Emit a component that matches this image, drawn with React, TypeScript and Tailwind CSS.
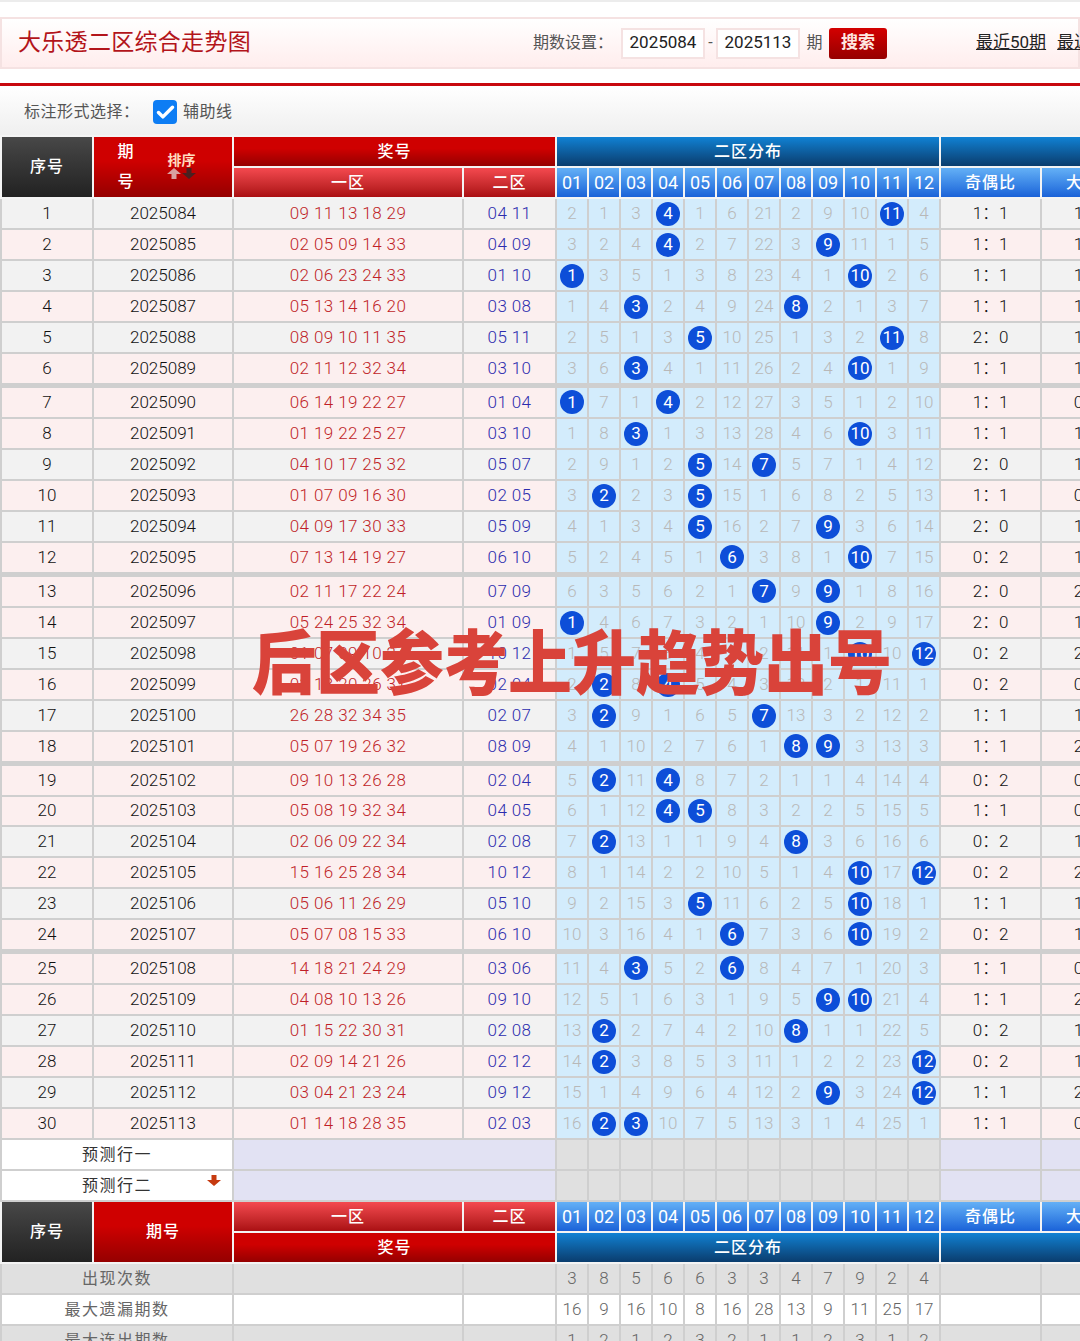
import { Check } from "lucide-react";

const NUMS = ["01", "02", "03", "04", "05", "06", "07", "08", "09", "10", "11", "12"];

// zone one, zone two, odd/even ratio, size ratio
const DRAWS: [string, number[], string, number][] = [
  ["09 11 13 18 29", [4, 11], "1：1", 1],
  ["02 05 09 14 33", [4, 9], "1：1", 1],
  ["02 06 23 24 33", [1, 10], "1：1", 1],
  ["05 13 14 16 20", [3, 8], "1：1", 1],
  ["08 09 10 11 35", [5, 11], "2：0", 1],
  ["02 11 12 32 34", [3, 10], "1：1", 1],
  ["06 14 19 22 27", [1, 4], "1：1", 0],
  ["01 19 22 25 27", [3, 10], "1：1", 1],
  ["04 10 17 25 32", [5, 7], "2：0", 1],
  ["01 07 09 16 30", [2, 5], "1：1", 0],
  ["04 09 17 30 33", [5, 9], "2：0", 1],
  ["07 13 14 19 27", [6, 10], "0：2", 1],
  ["02 11 17 22 24", [7, 9], "2：0", 2],
  ["05 24 25 32 34", [1, 9], "2：0", 1],
  ["01 07 09 10 24", [10, 12], "0：2", 2],
  ["03 13 20 26 31", [2, 4], "0：2", 0],
  ["26 28 32 34 35", [2, 7], "1：1", 1],
  ["05 07 19 26 32", [8, 9], "1：1", 2],
  ["09 10 13 26 28", [2, 4], "0：2", 0],
  ["05 08 19 32 34", [4, 5], "1：1", 0],
  ["02 06 09 22 34", [2, 8], "0：2", 1],
  ["15 16 25 28 34", [10, 12], "0：2", 2],
  ["05 06 11 26 29", [5, 10], "1：1", 1],
  ["05 07 08 15 33", [6, 10], "0：2", 1],
  ["14 18 21 24 29", [3, 6], "1：1", 0],
  ["04 08 10 13 26", [9, 10], "1：1", 2],
  ["01 15 22 30 31", [2, 8], "0：2", 1],
  ["02 09 14 21 26", [2, 12], "0：2", 1],
  ["03 04 21 23 24", [9, 12], "1：1", 2],
  ["01 14 18 28 35", [2, 3], "1：1", 0],
];

// misses per number just before the first draw
const START = [1, 0, 2, 0, 0, 5, 20, 1, 8, 9, 0, 3];

const misses = START.slice();
const rows = DRAWS.map(([one, two, ratio, size], i) => {
  const cells = misses.map((m, n) => {
    const hit = two.includes(n + 1);
    misses[n] = hit ? 0 : m + 1;
    return { hit, value: hit ? n + 1 : m + 1 };
  });
  return {
    seq: i + 1,
    period: 2025084 + i,
    one,
    two: two.map((n) => String(n).padStart(2, "0")).join(" "),
    ratio,
    size: `${size}：${2 - size}`,
    cells,
  };
});

const STATS = [
  { label: "出现次数", values: [3, 8, 5, 6, 6, 3, 3, 4, 7, 9, 2, 4], gray: true },
  { label: "最大遗漏期数", values: [16, 9, 16, 10, 8, 16, 28, 13, 9, 11, 25, 17], gray: false },
  { label: "最大连出期数", values: [1, 2, 1, 2, 3, 2, 1, 1, 2, 3, 1, 2], gray: true },
];

const line = "border-2 border-[#cfcfcf] p-0 text-center";
const head = "border-2 border-[#f4f4f4] p-0 text-center text-white text-[16px] font-medium tracking-[1px]";
const darkBg = "bg-gradient-to-b from-[#484848] to-[#222222]";
const redBg = "bg-gradient-to-b from-[#cf0000] from-40% to-[#950000]";
const lightRedBg = "bg-gradient-to-b from-[#f4494f] to-[#aa0f12]";
const navyBg = "bg-gradient-to-b from-[#1082d4] to-[#0a3d6e]";
const blueBg = "bg-gradient-to-b from-[#64b0f6] to-[#1a62d8]";

const SubHead = () => (
  <>
    {NUMS.map((n) => (
      <td key={n} className={`${head} ${blueBg} !text-[18px] !font-normal !tracking-normal`}>
        {n}
      </td>
    ))}
    <td className={`${head} ${blueBg}`}>奇偶比</td>
    <td className={`${head} ${blueBg}`}>大小比</td>
  </>
);

const Arrow = ({ down, color, className }: { down?: boolean; color: string; className?: string }) => (
  <svg width="14" height="11" viewBox="0 0 14 11" className={className}>
    <path
      d={down ? "M4.5 0h5v5H14L7 11 0 5h4.5z" : "M7 0l7 6H9.5v5h-5V6H0z"}
      fill={color}
    />
  </svg>
);

export default function App() {
  return (
    <div className="relative w-[1080px] h-[1341px] overflow-hidden bg-white font-['Roboto','Noto_Sans_CJK_SC',sans-serif] text-[#222]">
      <div className="h-[2px] bg-[#ececec]" />

      {/* title bar */}
      <div className="mt-[15px] h-[52px] flex items-center whitespace-nowrap border-2 border-[#f5e2e2] bg-gradient-to-b from-white to-[#ffeded] pl-[16px] text-[#555]">
        <h1 className="w-[515px] shrink-0 text-[23px] tracking-[0.3px] font-normal text-[#b3141a]">大乐透二区综合走势图</h1>
        <span className="w-[88px] shrink-0 text-[16px]">期数设置：</span>
        <div className="w-[84px] h-[31px] shrink-0 flex items-center justify-center border-2 border-[#f5e2e2] bg-white text-[17px] text-[#222]">2025084</div>
        <span className="w-[11px] shrink-0 text-center text-[16px]">-</span>
        <div className="w-[84px] h-[31px] shrink-0 flex items-center justify-center border-2 border-[#f5e2e2] bg-white text-[17px] text-[#222]">2025113</div>
        <span className="w-[29px] shrink-0 text-center text-[16px]">期</span>
        <button className="w-[58px] h-[31px] shrink-0 rounded-[3px] bg-gradient-to-b from-[#d40000] to-[#960000] text-[17px] font-bold text-[#ffe9e0]">搜索</button>
        <a className="ml-[89px] shrink-0 text-[17px] text-[#222] underline">最近50期</a>
        <a className="ml-[11px] shrink-0 text-[17px] text-[#222] underline">最近100期</a>
      </div>

      <div className="mt-[14px] h-[3px] bg-[#c8080e]" />

      {/* option row */}
      <div className="h-[49px] pt-[3px] flex items-center bg-gradient-to-b from-white to-[#efefef] pl-[24px] text-[16px] tracking-[0.5px] text-[#555]">
        <span className="w-[129px]">标注形式选择：</span>
        <span className="w-[24px] h-[24px] flex items-center justify-center rounded-[4px] bg-[#0d7df4]">
          <Check size={21} strokeWidth={4} color="white" />
        </span>
        <span className="ml-[6px]">辅助线</span>
      </div>

      <table className="w-[1142px] table-fixed border-collapse">
        <colgroup>
          <col className="w-[92px]" />
          <col className="w-[140px]" />
          <col className="w-[230px]" />
          <col className="w-[93px]" />
          {NUMS.map((n) => (
            <col key={n} className="w-[32px]" />
          ))}
          <col className="w-[101px]" />
          <col className="w-[101px]" />
        </colgroup>
        <tbody>
          <tr className="h-[30px]">
            <td rowSpan={2} className={`${head} ${darkBg}`}>序号</td>
            <td rowSpan={2} className={`${head} ${redBg}`}>
              <div className="flex items-center pl-[23px]">
                <div className="w-[18px] leading-[30px]">期号</div>
                <div className="ml-[32px] mb-[4px] flex flex-col items-center">
                  <span className="text-[14px] font-bold leading-[16px] tracking-normal text-[#ffdcc0]">排序</span>
                  <div className="flex gap-[1px]">
                    <Arrow color="#d8a0a0" />
                    <Arrow down color="#4a2020" />
                  </div>
                </div>
              </div>
            </td>
            <td colSpan={2} className={`${head} ${redBg}`}>奖号</td>
            <td colSpan={12} className={`${head} ${navyBg}`}>二区分布</td>
            <td colSpan={2} className={`${head} ${navyBg}`} />
          </tr>
          <tr className="h-[30px]">
            <td className={`${head} ${lightRedBg}`}>一区</td>
            <td className={`${head} ${lightRedBg}`}>二区</td>
            <SubHead />
          </tr>

          {rows.map((row, i) => {
            const groupStart = i > 0 && i % 6 === 0;
            const groupEnd = i % 6 === 5 && i < 29;
            const bg = i % 2 === 1 || groupStart ? "bg-[#fcefef]" : "bg-[#f2f2f2]";
            const bottom = groupEnd ? "!border-b-[5px]" : "";
            const rowH = groupEnd ? "h-[32px]" : groupStart ? "h-[33px]" : i === 19 ? "h-[30px]" : "h-[31px]";
            return (
              <tr key={row.seq} className={`${rowH} font-light`}>
                <td className={`${line} ${bg} ${bottom} text-[17px] text-[#111]`}>{row.seq}</td>
                <td className={`${line} ${bg} ${bottom} text-[17px] text-[#111]`}>{row.period}</td>
                <td className={`${line} ${bg} ${bottom} text-[17px] tracking-[0.4px] text-[#c01f28]`}>{row.one}</td>
                <td className={`${line} ${bg} ${bottom} text-[17px] tracking-[0.4px] text-[#2c2cae]`}>{row.two}</td>
                {row.cells.map((c, n) => (
                  <td key={n} className={`${line} ${bottom} bg-[#d3ecfc] text-[17px] text-[#b8b8b8]`}>
                    {c.hit ? (
                      <span className="mx-auto flex w-[24px] h-[24px] items-center justify-center rounded-full bg-[#0d4ed8] font-normal text-white">
                        {c.value}
                      </span>
                    ) : (
                      c.value
                    )}
                  </td>
                ))}
                <td className={`${line} ${bg} ${bottom} text-[17px] text-[#111]`}>{row.ratio}</td>
                <td className={`${line} ${bg} ${bottom} text-[17px] text-[#111]`}>{row.size}</td>
              </tr>
            );
          })}

          {["预测行一", "预测行二"].map((label, i) => (
            <tr key={label} className="h-[31px]">
              <td colSpan={2} className={`${line} bg-white text-[16px] tracking-[1.5px] text-[#333]`}>
                <div className="relative">
                  {label}
                  {i === 1 && <Arrow down color="#c63a10" className="absolute right-[11px] top-[1px]" />}
                </div>
              </td>
              <td colSpan={2} className={`${line} bg-[#e2e2f3]`} />
              {NUMS.map((n) => (
                <td key={n} className={`${line} bg-[#e0e0e0]`} />
              ))}
              <td className={`${line} bg-[#e2e2f3]`} />
              <td className={`${line} bg-[#e2e2f3]`} />
            </tr>
          ))}

          <tr className="h-[31px]">
            <td rowSpan={2} className={`${head} ${darkBg}`}>序号</td>
            <td rowSpan={2} className={`${head} ${redBg}`}>期号</td>
            <td className={`${head} ${lightRedBg}`}>一区</td>
            <td className={`${head} ${lightRedBg}`}>二区</td>
            <SubHead />
          </tr>
          <tr className="h-[31px]">
            <td colSpan={2} className={`${head} ${redBg}`}>奖号</td>
            <td colSpan={12} className={`${head} ${navyBg}`}>二区分布</td>
            <td colSpan={2} className={`${head} ${navyBg}`} />
          </tr>

          {STATS.map((s) => {
            const bg = s.gray ? "bg-[#e0e0e0]" : "bg-white";
            return (
              <tr key={s.label} className="h-[31px] text-[#666]">
                <td colSpan={2} className={`${line} ${bg} text-[16px] tracking-[1.5px]`}>{s.label}</td>
                <td className={`${line} ${bg}`} />
                <td className={`${line} ${bg}`} />
                {s.values.map((v, n) => (
                  <td key={n} className={`${line} ${bg} text-[17px] font-light`}>{v}</td>
                ))}
                <td className={`${line} ${bg}`} />
                <td className={`${line} ${bg}`} />
              </tr>
            );
          })}
        </tbody>
      </table>

      {/* watermark over the table */}
      <div className="absolute left-[252px] top-[626px] scale-y-110 whitespace-nowrap text-[64px] font-black leading-[80px] text-[#d9433a]">
        后区参考上升趋势出号
      </div>
    </div>
  );
}
